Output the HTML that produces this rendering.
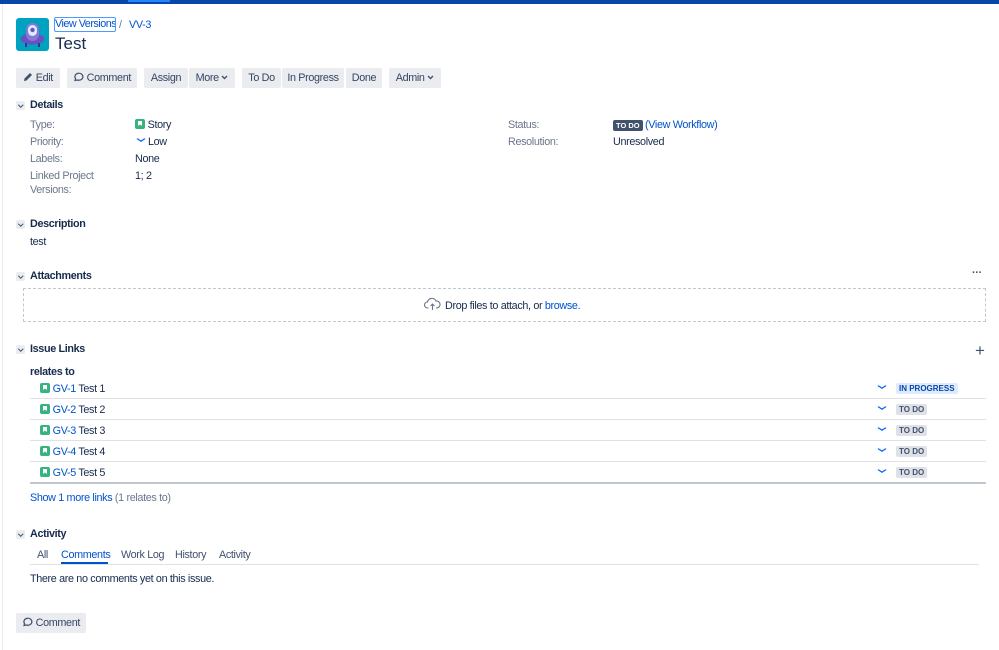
<!DOCTYPE html>
<html><head><meta charset="utf-8"><style>
*{margin:0;padding:0;box-sizing:border-box}
body{width:999px;height:650px;background:#fff;font-family:"Liberation Sans",sans-serif;font-size:10.8px;letter-spacing:-0.35px;color:#172b4d;position:relative;overflow:hidden}
.a{position:absolute;white-space:nowrap}
.lnk{color:#0052cc}
.btn{position:absolute;top:68px;height:20px;background:#ebecf0;border-radius:2px;color:#344563;line-height:20px;text-align:center}
.hd{font-weight:bold}
.chev{position:absolute;width:9px;height:9px;background:#ebecf0;border-radius:2px}
.chev:after{content:"";position:absolute;left:3px;top:2px;width:2.5px;height:2.5px;border-right:1.2px solid #42526e;border-bottom:1.2px solid #42526e;transform:rotate(45deg)}
.lbl{color:#6b778c}
.story{display:inline-block;width:10px;height:10px;background:#36b37e;border-radius:2px;position:relative;vertical-align:-1px}
.story:after{content:"";position:absolute;left:3px;top:2px;width:4px;height:5px;background:#fff;clip-path:polygon(0 0,100% 0,100% 100%,50% 70%,0 100%)}
.low{position:absolute;width:4px;height:4px;border-right:1.5px solid #0065ff;border-bottom:1.5px solid #0065ff;transform:scaleX(1.6) rotate(45deg)}
.loz{position:absolute;font-size:8px;font-weight:bold;letter-spacing:0;padding:1px 3px;border-radius:2px;line-height:9px}
.sep{position:absolute;left:30px;width:956px;height:1px;background:#dfe1e6}
</style></head><body>
<div class="a" style="left:0;top:0;width:999px;height:4px;background:#0747a6"></div>
<div class="a" style="left:128px;top:0;width:42px;height:2px;background:#2684ff"></div>
<div class="a" style="left:2px;top:4px;width:1px;height:646px;background:#ebecf0"></div>

<div class="a" style="left:16px;top:18px;width:33px;height:33px;background:#00a3bf;border-radius:3px;overflow:hidden">
<svg width="33" height="33" viewBox="0 0 33 33"><ellipse cx="16.5" cy="21" rx="12" ry="5.5" fill="#6554c0"/><rect x="10" y="5" width="13" height="18" rx="6.5" fill="#8777d9"/><rect x="12" y="7" width="9" height="11" rx="4.5" fill="#deebff"/><circle cx="16.5" cy="12" r="2.2" fill="#6554c0"/><rect x="9" y="25" width="2" height="4" fill="#403294"/><rect x="22" y="25" width="2" height="4" fill="#403294"/></svg></div>
<div class="a lnk" style="left:54px;top:17px;width:62px;height:15px;border:1px solid #4c9aff;border-radius:2px;line-height:13px;text-align:center;letter-spacing:-0.5px;overflow:hidden">View Versions</div>
<div class="a" style="left:119px;top:19px;color:#6b778c">/</div>
<div class="a lnk" style="left:129px;top:19px">VV-3</div>
<div class="a" style="left:55px;top:34px;font-size:17px;letter-spacing:0">Test</div>

<div class="btn" style="left:16px;width:44px"><svg width="10" height="10" viewBox="0 0 10 10" style="vertical-align:-1px"><path d="M1 9l.5-2.5L7 1l2 2-5.5 5.5z" fill="#42526e"/></svg> Edit</div>
<div class="btn" style="left:67px;width:70px"><svg width="11" height="10" viewBox="0 0 11 10" style="vertical-align:-1px"><path d="M2 8.5l.6-1.8A4 3.5 0 1 1 4.5 8z" fill="none" stroke="#42526e" stroke-width="1.2"/></svg> Comment</div>
<div class="btn" style="left:144px;width:44px">Assign</div>
<div class="btn" style="left:189px;width:46px">More <svg width="7" height="5" viewBox="0 0 7 5" style="vertical-align:1px"><path d="M1 1l2.5 2.5L6 1" fill="none" stroke="#42526e" stroke-width="1.4"/></svg></div>
<div class="btn" style="left:242px;width:39px">To Do</div>
<div class="btn" style="left:282px;width:62px">In Progress</div>
<div class="btn" style="left:346px;width:36px">Done</div>
<div class="btn" style="left:389px;width:52px">Admin <svg width="7" height="5" viewBox="0 0 7 5" style="vertical-align:1px"><path d="M1 1l2.5 2.5L6 1" fill="none" stroke="#42526e" stroke-width="1.4"/></svg></div>

<div class="chev" style="left:16px;top:101px"></div><div class="a hd" style="left:30px;top:99px">Details</div>
<div class="a lbl" style="left:30px;top:119px">Type:</div><div class="a" style="left:135px;top:119px"><span class="story"></span> Story</div>
<div class="a lbl" style="left:30px;top:136px">Priority:</div><div class="low" style="left:139px;top:137px"></div><div class="a" style="left:148px;top:136px">Low</div>
<div class="a lbl" style="left:30px;top:153px">Labels:</div><div class="a" style="left:135px;top:153px">None</div>
<div class="a lbl" style="left:30px;top:170px;line-height:13.5px">Linked Project<br>Versions:</div><div class="a" style="left:135px;top:170px">1; 2</div>
<div class="a lbl" style="left:508px;top:119px">Status:</div>
<div class="loz" style="left:613px;top:120px;background:#42526e;color:#fff;font-size:7.5px">TO DO</div>
<div class="a lnk" style="left:645px;top:119px">(View Workflow)</div>
<div class="a lbl" style="left:508px;top:136px">Resolution:</div><div class="a" style="left:613px;top:136px">Unresolved</div>

<div class="chev" style="left:16px;top:220px"></div><div class="a hd" style="left:30px;top:218px">Description</div>
<div class="a" style="left:30px;top:236px">test</div>

<div class="chev" style="left:16px;top:272px"></div><div class="a hd" style="left:30px;top:270px">Attachments</div>
<div class="a" style="left:972px;top:267px;font-weight:bold;color:#42526e">···</div>
<div class="a" style="left:23px;top:288px;width:963px;height:34px;border:1px dashed #c1c7d0"></div>
<svg class="a" style="left:424px;top:297px" width="17" height="14" viewBox="0 0 17 14"><path d="M4.5 11H3.5A3 3 0 0 1 3.5 5 4.5 4.5 0 0 1 12 4 3.5 3.5 0 0 1 13 11h-1" fill="none" stroke="#6b778c" stroke-width="1.1"/><path d="M8.5 13V7M6.5 9l2-2 2 2" fill="none" stroke="#6b778c" stroke-width="1.1"/></svg>
<div class="a" style="left:445px;top:300px">Drop files to attach, or <span class="lnk">browse.</span></div>

<div class="chev" style="left:16px;top:345px"></div><div class="a hd" style="left:30px;top:343px">Issue Links</div>
<div class="a" style="left:975px;top:341px;font-size:17px;color:#42526e">+</div>
<div class="a hd" style="left:30px;top:366px">relates to</div>

<div class="a" style="left:40px;top:383px"><span class="story"></span> <span class="lnk">GV-1</span> Test 1</div>
<div class="low" style="left:880px;top:384px"></div><div class="loz" style="left:896px;top:383px;background:#deebff;color:#0747a6">IN PROGRESS</div>
<div class="sep" style="top:398px"></div>
<div class="a" style="left:40px;top:404px"><span class="story"></span> <span class="lnk">GV-2</span> Test 2</div>
<div class="low" style="left:880px;top:405px"></div><div class="loz" style="left:896px;top:404px;background:#dfe1e6;color:#42526e">TO DO</div>
<div class="sep" style="top:419px"></div>
<div class="a" style="left:40px;top:425px"><span class="story"></span> <span class="lnk">GV-3</span> Test 3</div>
<div class="low" style="left:880px;top:426px"></div><div class="loz" style="left:896px;top:425px;background:#dfe1e6;color:#42526e">TO DO</div>
<div class="sep" style="top:440px"></div>
<div class="a" style="left:40px;top:446px"><span class="story"></span> <span class="lnk">GV-4</span> Test 4</div>
<div class="low" style="left:880px;top:447px"></div><div class="loz" style="left:896px;top:446px;background:#dfe1e6;color:#42526e">TO DO</div>
<div class="sep" style="top:461px"></div>
<div class="a" style="left:40px;top:467px"><span class="story"></span> <span class="lnk">GV-5</span> Test 5</div>
<div class="low" style="left:880px;top:468px"></div><div class="loz" style="left:896px;top:467px;background:#dfe1e6;color:#42526e">TO DO</div>
<div class="sep" style="top:482px;height:2px;background:#c1c7d0"></div>
<div class="a" style="left:30px;top:492px"><span class="lnk">Show 1 more links</span> <span class="lbl">(1 relates to)</span></div>

<div class="chev" style="left:16px;top:530px"></div><div class="a hd" style="left:30px;top:528px">Activity</div>
<div class="a" style="left:30px;top:564px;width:949px;height:1px;background:#dfe1e6"></div>
<div class="a" style="left:37px;top:549px;color:#42526e">All</div>
<div class="a" style="left:61px;top:549px;color:#0052cc">Comments</div>
<div class="a" style="left:61px;top:562px;width:47px;height:2px;background:#0052cc"></div>
<div class="a" style="left:121px;top:549px;color:#42526e">Work Log</div>
<div class="a" style="left:175px;top:549px;color:#42526e">History</div>
<div class="a" style="left:219px;top:549px;color:#42526e">Activity</div>
<div class="a" style="left:30px;top:573px">There are no comments yet on this issue.</div>
<div class="btn" style="left:16px;top:613px;width:70px"><svg width="11" height="10" viewBox="0 0 11 10" style="vertical-align:-1px"><path d="M2 8.5l.6-1.8A4 3.5 0 1 1 4.5 8z" fill="none" stroke="#42526e" stroke-width="1.2"/></svg> Comment</div>
</body></html>
